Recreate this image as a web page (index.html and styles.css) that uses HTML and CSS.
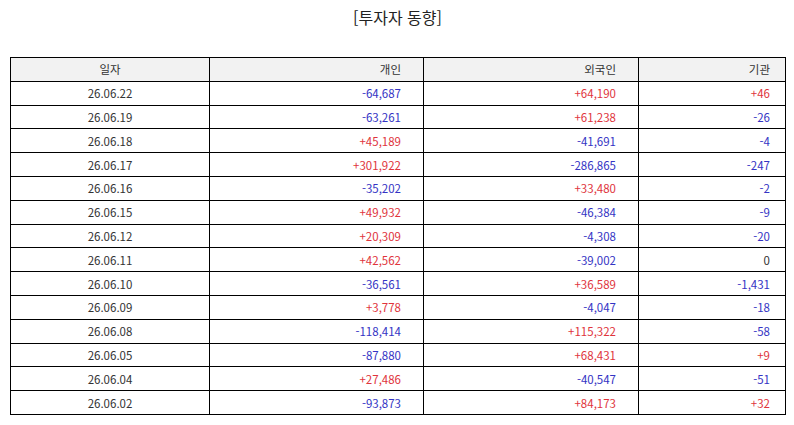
FILE: index.html
```html
<!DOCTYPE html>
<html lang="ko">
<head>
<meta charset="utf-8">
<link rel="stylesheet" href="styles.css">
</head>
<body>
<div class="page">
  <h1 class="title">[투자자 동향]</h1>
  <table class="grid">
    <colgroup>
      <col class="c-date"><col class="c-ind"><col class="c-for"><col class="c-inst">
    </colgroup>
    <thead>
      <tr><th class="date">일자</th><th class="num p1">개인</th><th class="num p2">외국인</th><th class="num p3">기관</th></tr>
    </thead>
    <tbody>
      <tr><td class="date">26.06.22</td><td class="num p1 neg">-64,687</td><td class="num p2 pos">+64,190</td><td class="num p3 pos">+46</td></tr>
      <tr><td class="date">26.06.19</td><td class="num p1 neg">-63,261</td><td class="num p2 pos">+61,238</td><td class="num p3 neg">-26</td></tr>
      <tr><td class="date">26.06.18</td><td class="num p1 pos">+45,189</td><td class="num p2 neg">-41,691</td><td class="num p3 neg">-4</td></tr>
      <tr><td class="date">26.06.17</td><td class="num p1 pos">+301,922</td><td class="num p2 neg">-286,865</td><td class="num p3 neg">-247</td></tr>
      <tr><td class="date">26.06.16</td><td class="num p1 neg">-35,202</td><td class="num p2 pos">+33,480</td><td class="num p3 neg">-2</td></tr>
      <tr><td class="date">26.06.15</td><td class="num p1 pos">+49,932</td><td class="num p2 neg">-46,384</td><td class="num p3 neg">-9</td></tr>
      <tr><td class="date">26.06.12</td><td class="num p1 pos">+20,309</td><td class="num p2 neg">-4,308</td><td class="num p3 neg">-20</td></tr>
      <tr><td class="date">26.06.11</td><td class="num p1 pos">+42,562</td><td class="num p2 neg">-39,002</td><td class="num p3 zero">0</td></tr>
      <tr><td class="date">26.06.10</td><td class="num p1 neg">-36,561</td><td class="num p2 pos">+36,589</td><td class="num p3 neg">-1,431</td></tr>
      <tr><td class="date">26.06.09</td><td class="num p1 pos">+3,778</td><td class="num p2 neg">-4,047</td><td class="num p3 neg">-18</td></tr>
      <tr><td class="date">26.06.08</td><td class="num p1 neg">-118,414</td><td class="num p2 pos">+115,322</td><td class="num p3 neg">-58</td></tr>
      <tr><td class="date">26.06.05</td><td class="num p1 neg">-87,880</td><td class="num p2 pos">+68,431</td><td class="num p3 pos">+9</td></tr>
      <tr><td class="date">26.06.04</td><td class="num p1 pos">+27,486</td><td class="num p2 neg">-40,547</td><td class="num p3 neg">-51</td></tr>
      <tr><td class="date">26.06.02</td><td class="num p1 neg">-93,873</td><td class="num p2 pos">+84,173</td><td class="num p3 pos">+32</td></tr>
    </tbody>
  </table>
</div>
</body>
</html>
```
FILE: styles.css
```css
html, body {
  margin: 0;
  padding: 0;
  background: #ffffff;
}
body {
  font-family: "Noto Sans CJK KR", "Noto Sans", sans-serif;
  color: #333333;
}
.page {
  width: 794px;
  padding: 0 9px 0 10px;
  box-sizing: border-box;
}
.title {
  margin: 0;
  padding-top: 5px;
  height: 57px;
  box-sizing: border-box;
  font-size: 16px;
  font-weight: normal;
  text-align: center;
  color: #222222;
  line-height: 24px;
}
.grid {
  width: 775px;
  border-collapse: collapse;
  table-layout: fixed;
  font-size: 11.5px;
}
.c-date { width: 199px; }
.c-ind { width: 214px; }
.c-for { width: 215px; }
.c-inst { width: 147px; }
.grid th, .grid td {
  border: 1px solid #000000;
  height: 23.8px;
  padding: 0;
  line-height: 14px;
  font-weight: normal;
  box-sizing: border-box;
}
.grid thead th {
  background: #f2f2f2;
  color: #333333;
}
.date { text-align: center; }
.num { text-align: right; }
.p1, .p2 { padding-right: 22px !important; }
.p3 { padding-right: 15px !important; }
.pos { color: #e0343c; }
.neg { color: #3434c4; }
.zero { color: #333333; }
```
